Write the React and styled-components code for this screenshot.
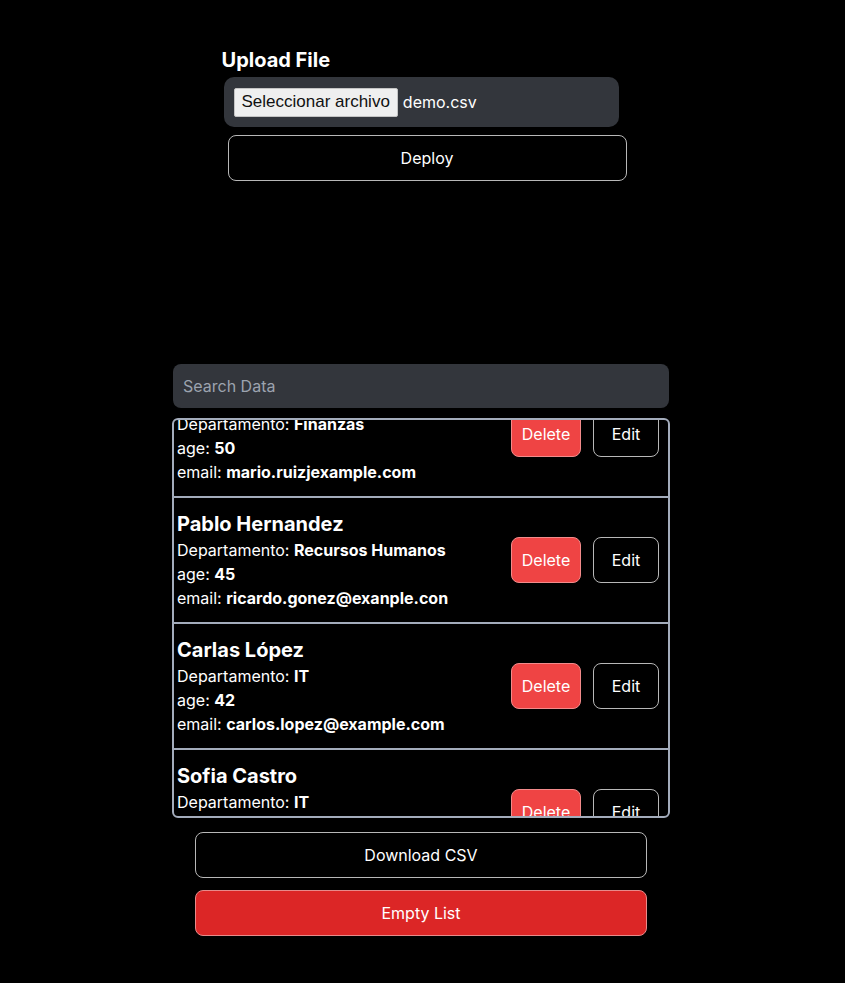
import React, { useEffect, useRef, useState } from 'react';
import styled, { createGlobalStyle } from 'styled-components';

const GlobalStyle = createGlobalStyle`
  html, body {
    margin: 0;
    padding: 0;
    background: #000;
    color: #fff;
    font-family: 'Inter', 'Noto Sans', sans-serif;
  }
  * {
    box-sizing: border-box;
  }
`;

const Page = styled.div`
  min-height: 983px;
  background: #000;
  display: flex;
  flex-direction: column;
  align-items: center;
  padding-top: 46px;
`;

// Seccion de subida
const UploadSection = styled.section`
  width: 405px;
  margin-left: 3px;
  display: flex;
  flex-direction: column;
`;

const Title = styled.h2`
  margin: 0;
  font-size: 20px;
  line-height: 28px;
  font-weight: 700;
  height: 31px;
`;

const FileBox = styled.div`
  width: 395px;
  height: 50px;
  margin-left: 2px;
  background: #33363c;
  border-radius: 10px;
  display: flex;
  align-items: center;
  padding: 0 10px;
  gap: 5px;
`;

const FileButton = styled.label`
  height: 29px;
  display: flex;
  align-items: center;
  padding: 0 7px;
  background: #efefef;
  border: 1px solid #c4c4c4;
  border-radius: 2px;
  color: #111;
  font-family: 'Liberation Sans', Arial, sans-serif;
  font-size: 17px;
  cursor: pointer;
`;

const FileName = styled.span`
  font-size: 16px;
  color: #fff;
`;

const OutlineButton = styled.button`
  width: ${(p) => p.$width}px;
  height: ${(p) => p.$height || 46}px;
  margin-left: ${(p) => p.$offset || 0}px;
  background: ${(p) => p.$bg || '#000'};
  border: 1px solid ${(p) => p.$border || '#b8b8b8'};
  border-radius: 8px;
  color: #fff;
  font-family: 'Inter', 'Noto Sans', sans-serif;
  font-size: 16px;
  font-weight: 400;
  cursor: pointer;
  flex-shrink: 0;
`;

const DeployButton = styled(OutlineButton)`
  margin-top: 8px;
`;

// Lista de empleados
const DataSection = styled.section`
  width: 498px;
  margin-top: 183px;
  margin-left: -3px;
  display: flex;
  flex-direction: column;
  align-items: center;
`;

const SearchInput = styled.input`
  width: 496px;
  height: 44px;
  border: none;
  outline: none;
  background: #33363c;
  border-radius: 8px;
  padding: 0 10px;
  color: #fff;
  font-family: 'Inter', 'Noto Sans', sans-serif;
  font-size: 16px;

  &::placeholder {
    color: #9ca3af;
  }
`;

const List = styled.div`
  width: 498px;
  height: 400px;
  margin-top: 10px;
  border: 2px solid #a3acbb;
  border-radius: 6px;
  overflow-y: auto;
  scrollbar-width: none;

  &::-webkit-scrollbar {
    display: none;
  }
`;

const Row = styled.div`
  display: flex;
  align-items: center;
  justify-content: space-between;
  padding: 12px 9px 12px 3px;
  border-bottom: 2px solid #a3acbb;
`;

const Info = styled.div`
  display: flex;
  flex-direction: column;
`;

const Name = styled.div`
  font-size: 20px;
  line-height: 28px;
  font-weight: 700;
`;

const Field = styled.div`
  font-size: 16px;
  line-height: 24px;

  b {
    font-weight: 700;
  }
`;

const Actions = styled.div`
  display: flex;
  gap: 12px;
`;

const Footer = styled.div`
  display: flex;
  flex-direction: column;
  gap: 12px;
  margin-top: 14px;
`;

const employees = [
  { name: 'Mario Ruiz', dept: 'Finanzas', age: 50, email: 'mario.ruizjexample.com' },
  { name: 'Pablo Hernandez', dept: 'Recursos Humanos', age: 45, email: 'ricardo.gonez@exanple.con' },
  { name: 'Carlas López', dept: 'IT', age: 42, email: 'carlos.lopez@example.com' },
  { name: 'Sofia Castro', dept: 'IT', age: 38, email: 'sofia.castro@example.com' },
];

const App = () => {
  const [search, setSearch] = useState('');
  const listRef = useRef(null);

  useEffect(() => {
    if (listRef.current) listRef.current.scrollTop = 48;
  }, []);

  const filtered = employees.filter((e) =>
    e.name.toLowerCase().includes(search.toLowerCase())
  );

  return (
    <>
      <GlobalStyle />
      <Page>
        <UploadSection>
          <Title>Upload File</Title>
          <FileBox>
            <FileButton>Seleccionar archivo</FileButton>
            <FileName>demo.csv</FileName>
          </FileBox>
          <DeployButton $width={399} $offset={6}>Deploy</DeployButton>
        </UploadSection>

        <DataSection>
          <SearchInput
            placeholder="Search Data"
            value={search}
            onChange={(e) => setSearch(e.target.value)}
          />
          <List ref={listRef}>
            {filtered.map((emp) => (
              <Row key={emp.email}>
                <Info>
                  <Name>{emp.name}</Name>
                  <Field>Departamento: <b>{emp.dept}</b></Field>
                  <Field>age: <b>{emp.age}</b></Field>
                  <Field>email: <b>{emp.email}</b></Field>
                </Info>
                <Actions>
                  <OutlineButton $width={70} $bg="#ef4444" $border="#f28b8b">Delete</OutlineButton>
                  <OutlineButton $width={66}>Edit</OutlineButton>
                </Actions>
              </Row>
            ))}
          </List>
          <Footer>
            <OutlineButton $width={452}>Download CSV</OutlineButton>
            <OutlineButton $width={452} $bg="#dc2626" $border="#e88a8a">Empty List</OutlineButton>
          </Footer>
        </DataSection>
      </Page>
    </>
  );
};

export default App;
